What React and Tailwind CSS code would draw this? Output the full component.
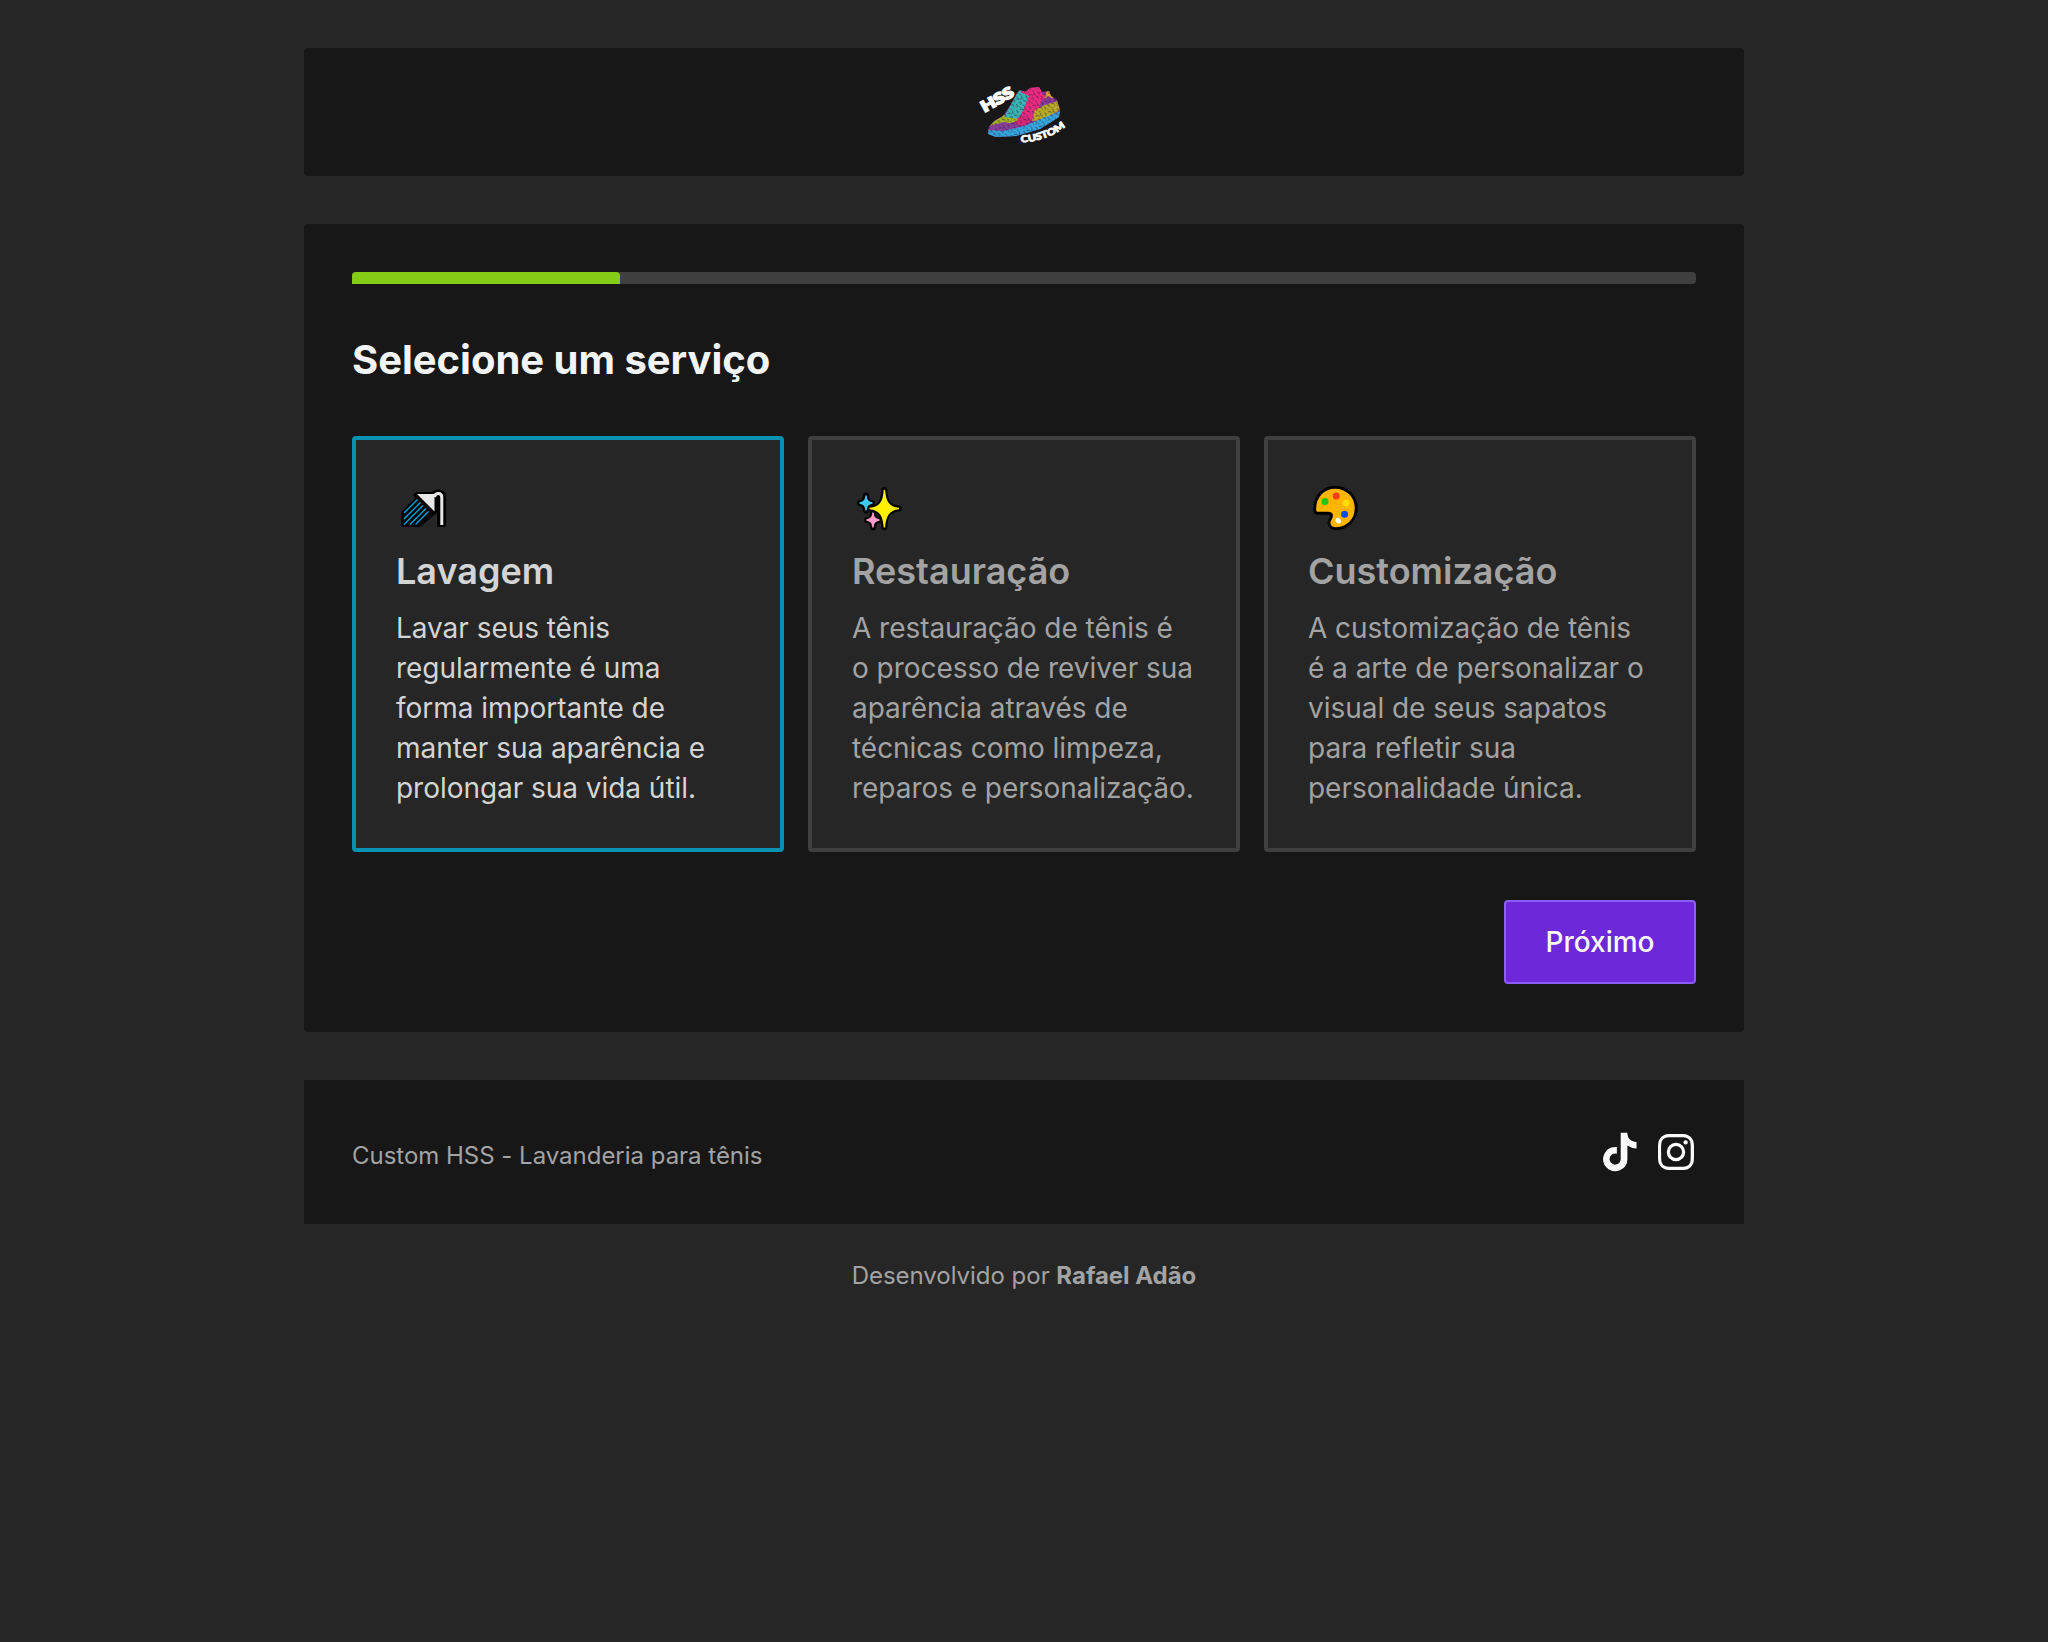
import { BiLogoInstagram, BiLogoTiktok } from "react-icons/bi";

function ShowerIcon() {
  return (
    <svg viewBox="390 475 80 70" width="80" height="70" fill="none" strokeLinejoin="round">
      <path
        d="M403.500 512.500 418 498l-2.500-3 2-1h15.500q2-2.500 5.500-2.500 5.500 0 5.500 6v27.500h-5V499v12l-4.500 1-15 13h-16.500Z"
        fill="#000"
        stroke="#000"
        strokeWidth="4"
      />
      <path d="M417 494h17.500v17.500Z" fill="#e8e8e8" />
      <path d="M434.500 497q.5-3.500 4-3.500 3.300 0 3.300 4v27.500" stroke="#e8e8e8" strokeWidth="3" />
      <path
        d="M404 513l13.500-13.500M404 519l16.500-16.500M404 524.500l19-19M410 524.500l16-16M415.500 524.500l13-13"
        stroke="#00a5dc"
        strokeWidth="1.400"
      />
    </svg>
  );
}

function SparklesIcon() {
  return (
    <svg viewBox="840 475 80 70" width="80" height="70" strokeLinejoin="round">
      <g fill="#000" stroke="#000" strokeWidth="6">
        <path d="M884.300 490C885 502 888 507.500 899 508.500 888 509.500 885 515 884.300 527 883.600 515 881 509.500 870 508.500 881 507.500 883.600 502 884.300 490Z" />
        <path d="M866 495.500c.5 5 2 7 6 7.500-4 .5-5.500 2.500-6 7.500-.5-5-2-7-6-7.500 4-.5 5.500-2.500 6-7.500Z" />
        <path d="M873 512.500c.5 5 2 7 6 7.500-4 .5-5.500 2.500-6 7.500-.5-5-2-7-6-7.500 4-.5 5.500-2.500 6-7.500Z" />
      </g>
      <path fill="#40c8f4" d="M865.300 495.500h1.400c.3 4.500 1.800 6.200 5.800 6.800v1.400c-4 .6-5.500 2.300-5.800 6.800h-1.400c-.3-4.500-1.800-6.200-5.800-6.800v-1.400c4-.6 5.500-2.300 5.800-6.800Z" />
      <path fill="#ff9bc8" d="M872.300 512.500h1.400c.3 4.500 1.800 6.200 5.800 6.800v1.400c-4 .6-5.500 2.300-5.800 6.800h-1.400c-.3-4.500-1.800-6.200-5.800-6.800v-1.400c4-.6 5.500-2.300 5.800-6.800Z" />
      <path fill="#fff000" d="M883.700 490h1.400C886 501.500 889 506.800 899 507.800v1.400C889 510.200 886 516 885.100 527.500h-1.400C882.900 516 880 510.200 869.500 509.200v-1.400C880 506.800 882.900 501.500 883.700 490Z" />
    </svg>
  );
}

function PaletteIcon() {
  return (
    <svg viewBox="1290 475 90 70" width="90" height="70">
      <path
        d="M1318 513.300c-2 0-3.300-1.500-3.300-4.300 0-13 9-21.700 20.500-21.700 11.800 0 21 9.200 21 20.700 0 12-9 20.700-20 20.700-4.700 0-7.500-2.500-7.200-6.200.2-3 2.500-4.200 2.500-6.700 0-1.800-1.400-2.500-3.500-2.500Z"
        fill="#ffb400"
        stroke="#000"
        strokeWidth="2.900"
      />
      <circle cx="1325" cy="501.500" r="3.500" fill="#18c818" />
      <circle cx="1336.200" cy="496" r="3.500" fill="#f33b1d" />
      <circle cx="1346.200" cy="503" r="3.500" fill="#ffdd00" />
      <circle cx="1344.600" cy="514.200" r="3.500" fill="#0848ff" />
      <ellipse cx="1338.300" cy="520.700" rx="3.100" ry="2.400" transform="rotate(42 1338.300 520.700)" fill="#fff" />
    </svg>
  );
}

function Logo() {
  return (
    <svg viewBox="960 70 130 90" width="130" height="90" role="img" aria-label="HSS Custom">
      <defs>
        <pattern id="grain" width="13" height="11" patternUnits="userSpaceOnUse" patternTransform="rotate(-18)">
          <path
            d="M0 1.500h2.500l1 2M6 0l-1 2.500 2 1M9 1l2 1-1 2.500M1 5l2.500 1-1 2M6 5.500h2l.5 2M11 6l1.500 2-2 1.500M4 9l2 1M0 9.500l1.500 1M8 9.500l1-1"
            fill="none"
            stroke="#2c1838"
            strokeWidth=".9"
            opacity=".65"
          />
        </pattern>
        <clipPath id="shoe">
          <path d="M988 134 989 127 994 121 1003 116 1011 104 1017 93 1020 90 1025 92 1030 88 1039 87 1042 92 1049 91 1051 96 1057 100 1060 110 1059 117 1040 129 1016 136 996 137Z" />
        </clipPath>
      </defs>
      <g clipPath="url(#shoe)">
        <path d="M985 85h80v55h-80Z" fill="#8c329e" />
        <path d="M988 126 1003 115l13 1 5 4-14 4Z" fill="#a7b720" />
        <path d="m1004 117 16-29 11 6-12 25Z" fill="#38b8b4" />
        <path d="m1020 92 11-6h9l2 8 6 2-8 15-7 9-12-5 8-19Z" fill="#ef2b80" />
        <path d="m1047 90 6 2 1 6-10 2Z" fill="#e0a025" />
        <path d="m1041 101 7-5 7 4-6 9-11 1Z" fill="#8d3c9d" />
        <path d="m1035 110 10-5 13-4 2 9-18 10-10 1Z" fill="#b9ae25" />
        <path d="m988 126 16-4 16 3-6 6-27 1Z" fill="#8b409c" />
        <path d="M1020 115l12 5-8 6-9-2Z" fill="#dc2876" />
        <path d="m986 130 17 1 21-5 36-15v6l-20 13-23 9h-29Z" fill="#35a9df" />
        <path d="M985 85h80v55h-80Z" fill="url(#grain)" />
      </g>
      <g fontFamily="Lato, sans-serif" fontWeight="900" fill="#fff" stroke="#fff">
        <text transform="translate(984.500 112.500) rotate(-29)" fontSize="15" strokeWidth="1.700" textLength="35" lengthAdjust="spacingAndGlyphs">HSS</text>
        <path id="arc" d="M1021 142.500Q1050 141 1069 123.500" fill="none" stroke="none" />
        <text fontSize="9.500" strokeWidth=".8" textLength="48" lengthAdjust="spacingAndGlyphs">
          <textPath href="#arc">CUSTOM</textPath>
        </text>
      </g>
    </svg>
  );
}

const services = [
  {
    title: "Lavagem",
    Icon: ShowerIcon,
    offset: "-ml-1.5",
    selected: true,
    lines: ["Lavar seus tênis", "regularmente é uma", "forma importante de", "manter sua aparência e", "prolongar sua vida útil."],
  },
  {
    title: "Restauração",
    Icon: SparklesIcon,
    offset: "-ml-3",
    lines: ["A restauração de tênis é", "o processo de reviver sua", "aparência através de", "técnicas como limpeza,", "reparos e personalização."],
  },
  {
    title: "Customização",
    Icon: PaletteIcon,
    offset: "-ml-[18px]",
    lines: ["A customização de tênis", "é a arte de personalizar o", "visual de seus sapatos", "para refletir sua", "personalidade única."],
  },
];

function ServiceCard({ title, Icon, offset, selected, lines }) {
  return (
    <button
      className={
        selected
          ? "rounded border-4 border-[#0891b2] bg-[#262626] p-10 text-left text-[#d4d4d4]"
          : "rounded border-4 border-[#404040] bg-[#262626] p-10 text-left text-[#a3a3a3]"
      }
    >
      <div className={offset}>
        <div className="-mt-[5px] h-[68px]">
          <Icon />
        </div>
      </div>
      <h2 className="text-[36px] leading-14 font-semibold">{title}</h2>
      <p className="mt-[9px] text-[28px] leading-10 tracking-[-0.04px] whitespace-nowrap">
        {lines.map((line) => (
          <span key={line} className="block">{line}</span>
        ))}
      </p>
    </button>
  );
}

export default function App() {
  return (
    <div className="min-h-[1642px] bg-[#262626] pt-12 font-['Inter',sans-serif]">
      <div className="mx-auto w-[1440px]">
        <header className="flex h-32 items-center justify-center rounded bg-[#171717]">
          <div className="mt-1.5 ml-0.5">
            <Logo />
          </div>
        </header>
        <main className="mt-12 rounded bg-[#171717] p-12">
          <div className="h-3 rounded bg-[#404040]">
            <div className="h-3 w-[268px] rounded-t bg-[#84cc16]" />
          </div>
          <h1 className="mt-12 text-[40px] leading-14 font-bold tracking-[-0.02px] text-[#f3f4f6]">Selecione um serviço</h1>
          <div className="mt-12 grid grid-cols-3 gap-6">
            {services.map((service) => (
              <ServiceCard key={service.title} {...service} />
            ))}
          </div>
          <div className="mt-12 flex justify-end">
            <button className="h-21 w-48 rounded border-2 border-[#8b5cf6] bg-[#6d28d9] text-[28px] font-medium text-[#fafafa]">
              Próximo
            </button>
          </div>
        </main>
        <footer className="mt-12 flex h-36 items-center justify-between bg-[#171717] px-12">
          <p className="mt-2 text-[24px] leading-8 tracking-[-0.02px] text-[#a3a3a3]">Custom HSS - Lavanderia para tênis</p>
          <div className="-mr-1 flex items-center gap-[9px] text-[48px] text-[#fafafa]">
            <BiLogoTiktok className="size-[46px]" />
            <BiLogoInstagram />
          </div>
        </footer>
        <p className="mt-9 text-center text-[24px] leading-8 tracking-[-0.03px] text-[#a3a3a3]">
          Desenvolvido por <strong className="font-bold">Rafael Adão</strong>
        </p>
      </div>
    </div>
  );
}
